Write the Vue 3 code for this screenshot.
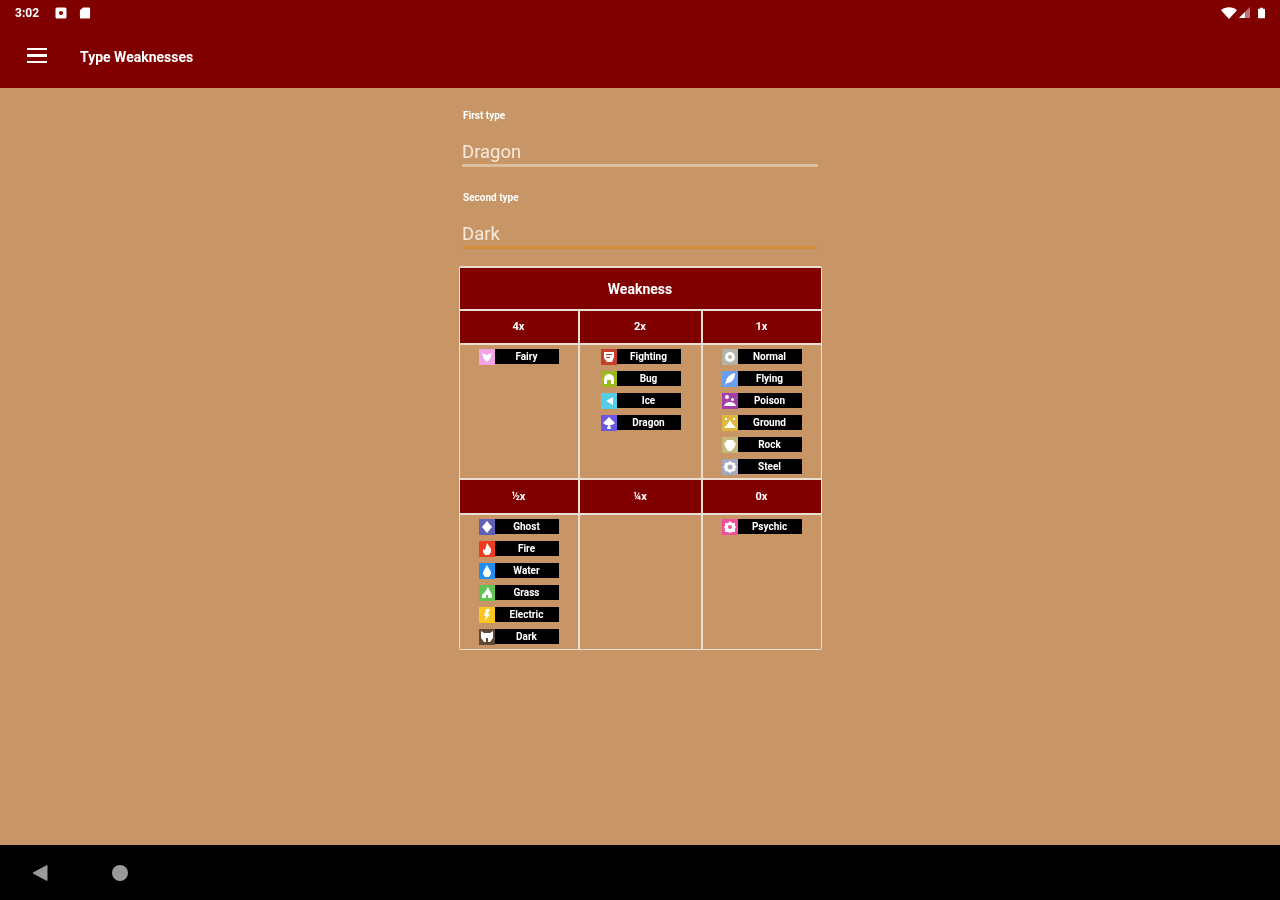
<template>
  <div class="screen">
    <header class="app-bar">
      <div class="status-bar">
        <span class="clock">3:02</span>
        <svg class="status-icon" viewBox="0 0 12 12"><rect x="0.5" y="0.5" width="11" height="11" rx="1.5" fill="#fff" /><circle cx="6" cy="6" r="2" fill="#800000" /></svg>
        <svg class="status-icon sd" viewBox="0 0 12 13"><path d="M4 0.5h6.5a1 1 0 0 1 1 1v10a1 1 0 0 1-1 1h-9a1 1 0 0 1-1-1V3.5z" fill="#fff" /></svg>
        <span class="status-space"></span>
        <svg class="wifi" viewBox="0 0 16 12"><path d="M0 3.2C4.4-0.6 11.6-0.6 16 3.2L8 12z" fill="#fff" /></svg>
        <svg class="signal" viewBox="0 0 11 11"><path d="M11 0v11H0z" fill="#fff" opacity="0.45" /><path d="M6 5v6H0z" fill="#fff" /></svg>
        <svg class="battery" viewBox="0 0 8 12"><path d="M2.5 0h3v1H7a1 1 0 0 1 1 1v9a1 1 0 0 1-1 1H1a1 1 0 0 1-1-1V2a1 1 0 0 1 1-1h1.500z" fill="#fff" /></svg>
      </div>
      <div class="toolbar">
        <div class="hamburger"><i></i><i></i><i></i></div>
        <h1>Type Weaknesses</h1>
      </div>
    </header>

    <main class="content">
      <div class="field">
        <label>First type</label>
        <div class="value">Dragon</div>
        <div class="underline"></div>
      </div>
      <div class="field second">
        <label>Second type</label>
        <div class="value">Dark</div>
        <div class="underline focused"></div>
      </div>

      <section class="table">
        <div class="title">Weakness</div>
        <template v-for="(group, g) in groups" :key="g">
          <div v-for="col in group" :key="col.head" class="head" :class="`head-${g}`">{{ col.head }}</div>
          <div v-for="(col, c) in group" :key="col.head + 'b'" class="cell" :class="{ middle: c === 1 }">
            <div v-for="name in col.types" :key="name" class="chip">
              <svg class="type-icon" viewBox="0 0 16 16">
                <rect width="16" height="16" :fill="types[name].color" />
                <path :d="types[name].d" fill="#fff" fill-rule="evenodd" />
              </svg>
              <span class="type-name">{{ name }}</span>
            </div>
          </div>
        </template>
      </section>
    </main>

    <footer class="nav-bar">
      <svg class="nav-back" viewBox="0 0 16 18"><path d="M15 1.500V16.500L1 9z" fill="#9a9a9a" stroke="#9a9a9a" stroke-linejoin="round" /></svg>
      <span class="nav-home"></span>
    </footer>
  </div>
</template>

<script setup>
const types = {
  Fairy: { color: '#f2a2e6', d: 'M3 4l5 2 5-2-2 6-3 3-3-3z' },
  Fighting: { color: '#c4402c', d: 'M3 3h10v5l-2 5H6L3 9zM5 5v1h6V5zM5 8v1h4V8z' },
  Bug: { color: '#9bb81e', d: 'M8 3a5 5 0 0 1 5 5v5h-3V9H6v4H3V8a5 5 0 0 1 5-5z' },
  Ice: { color: '#52cfe6', d: 'M12 4v8L5 8z' },
  Dragon: { color: '#6a58e0', d: 'M8 2l3 3 3 3-3 2-2 0 1 4H6l1-4-2 0-3-2 3-3z' },
  Normal: { color: '#b4b4a6', d: 'M8 3a5 5 0 1 1 0 10A5 5 0 0 1 8 3zm0 3a2 2 0 1 0 0 4 2 2 0 0 0 0-4z' },
  Flying: { color: '#6a9cf0', d: 'M13 2c0 6-3 10-8 10l-2 2 1-4c1-4 4-7 9-8z' },
  Poison: { color: '#a23fa8', d: 'M5 2a2 2 0 1 1 0 4 2 2 0 0 1 0-4zM10.500 5a1.500 1.500 0 1 1 0 3 1.500 1.500 0 0 1 0-3zM2 13c1-3 3-4 6-4s5 1 6 4z' },
  Ground: { color: '#e0b83e', d: 'M8 5l2.500 4 3.500 4H2l3.500-4zM3 3h2v2H3zM11 3h2v2h-2z' },
  Rock: { color: '#c6b87c', d: 'M5 3h6l3 4-2 4-3 3H6l-2-3-2-4z' },
  Steel: { color: '#a2a9c0', d: 'M8 2l2 1.500 3 .5.500 3L15 8l-1.500 1-.5 3-3 .5L8 14l-2-1.500-3-.5-.5-3L1 8l1.500-1L3 4l3-.5zM8 5.500a2.500 2.500 0 1 0 0 5 2.500 2.500 0 0 0 0-5z' },
  Ghost: { color: '#6060b8', d: 'M8 2l5 6-5 6-5-6z' },
  Fire: { color: '#f03a20', d: 'M8 2l4 6v3l-2 3H6l-2-3V8l2 1z' },
  Water: { color: '#2090f0', d: 'M8 2l4 7v2l-2 3H6l-2-3V9z' },
  Grass: { color: '#62c452', d: 'M9 2l4 8v3H9v-3H7v3H3v-3l3-3z' },
  Electric: { color: '#f8c820', d: 'M7 2h4L9 7h2l-5 7 1-5H5z' },
  Dark: { color: '#604836', d: 'M2 2l3 2h6l3-2v7l-3 4H9V9H7v4H5L2 9z' },
  Psychic: { color: '#f0509a', d: 'M8 2l2 2h3v3l1 1-1 2v3h-3l-2 1-2-1H3v-3L2 8l1-1V4h3zm0 4a2 2 0 1 0 0 4 2 2 0 0 0 0-4z' },
}

const groups = [
  [
    { head: '4x', types: ['Fairy'] },
    { head: '2x', types: ['Fighting', 'Bug', 'Ice', 'Dragon'] },
    { head: '1x', types: ['Normal', 'Flying', 'Poison', 'Ground', 'Rock', 'Steel'] },
  ],
  [
    { head: '½x', types: ['Ghost', 'Fire', 'Water', 'Grass', 'Electric', 'Dark'] },
    { head: '¼x', types: [] },
    { head: '0x', types: ['Psychic'] },
  ],
]
</script>

<style>
body {
  margin: 0;
  background: #c89666;
}
</style>

<style scoped>
.screen {
  width: 1280px;
  height: 900px;
  display: flex;
  flex-direction: column;
  font-family: Roboto, "Liberation Sans", sans-serif;
  background: #c89666;
  overflow: hidden;
  filter: blur(0.6px);
}

.app-bar {
  height: 88px;
  background: #800000;
  color: #fff;
  flex: none;
}

.status-bar {
  height: 24px;
  display: flex;
  align-items: center;
  padding: 1px 15px 0;
  box-sizing: border-box;
}

.clock {
  font-size: 12px;
  font-weight: 700;
  width: 40px;
}

.status-icon {
  width: 12px;
  height: 12px;
  margin-right: 12px;
}

.status-space {
  flex: 1;
}

.wifi {
  width: 16px;
  height: 12px;
  margin-right: 2px;
}

.signal {
  width: 11px;
  height: 11px;
  margin-right: 8px;
}

.battery {
  width: 7px;
  height: 12px;
}

.toolbar {
  height: 64px;
  display: flex;
  align-items: center;
  padding-left: 27px;
  box-sizing: border-box;
}

.hamburger {
  width: 20px;
  display: flex;
  flex-direction: column;
  gap: 4px;
  margin-right: 33px;
  margin-bottom: 1px;
}

.hamburger i {
  display: block;
  height: 2.500px;
  background: #fff;
}

.toolbar h1 {
  margin: 2px 0 0;
  font-size: 14px;
  font-weight: 700;
}

.content {
  flex: 1;
  display: flex;
  flex-direction: column;
  align-items: center;
  padding-top: 22px;
}

.field {
  width: 356px;
}

.field.second {
  margin-top: 25px;
}

.field label {
  display: block;
  height: 12px;
  line-height: 12px;
  font-size: 10px;
  font-weight: 700;
  color: #fff;
  padding-left: 1px;
}

.value {
  height: 22px;
  line-height: 22px;
  margin-top: 19px;
  font-size: 18.500px;
  color: #f6eadc;
}

.underline {
  height: 3px;
  margin-top: 1px;
  background: #dcbd9c;
}

.underline.focused {
  background: #d38e3c;
}

.table {
  width: 363px;
  box-sizing: border-box;
  margin-top: 17px;
  padding: 2px 1px 1px;
  background: #eadfd2;
  border-radius: 2px;
  display: grid;
  grid-template-columns: 118px 121px 118px;
  grid-template-rows: 41px 32px 133px 33px 134px;
  column-gap: 2px;
  row-gap: 2px;
}

.title {
  grid-column: 1 / -1;
  background: #800000;
  color: #fff;
  font-size: 14px;
  font-weight: 700;
  display: flex;
  align-items: center;
  justify-content: center;
}

.head {
  background: #800000;
  color: #fff;
  font-size: 11px;
  font-weight: 700;
  display: flex;
  align-items: center;
  justify-content: center;
}

.head-0 {
  padding-bottom: 2px;
}

.cell {
  background: #c89666;
  display: flex;
  flex-direction: column;
  align-items: center;
  gap: 7px;
  padding-top: 4px;
  box-sizing: border-box;
}

.cell.middle {
  padding-left: 1px;
}

.chip {
  display: flex;
  width: 80px;
  height: 15px;
  flex: none;
}

.type-icon {
  width: 16px;
  height: 16px;
  flex: none;
  margin-top: -0.5px;
}

.type-name {
  flex: 1;
  background: #000;
  color: #fff;
  font-size: 10px;
  font-weight: 700;
  line-height: 16px;
  text-align: center;
}

.nav-bar {
  height: 55px;
  flex: none;
  background: #000;
  display: flex;
  align-items: center;
  padding-left: 32px;
}

.nav-back {
  width: 16px;
  height: 18px;
  margin-right: 64px;
}

.nav-home {
  width: 16px;
  height: 16px;
  border-radius: 50%;
  background: #9a9a9a;
}
</style>
